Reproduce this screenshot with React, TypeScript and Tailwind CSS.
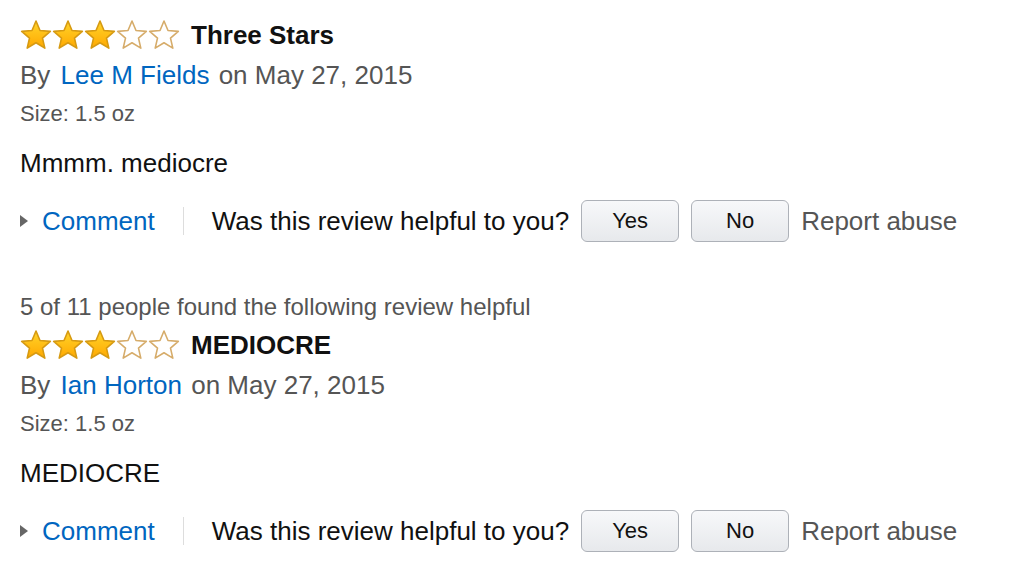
import { useId } from "react";

interface Review {
  id: number;
  helpful?: string;
  rating: number;
  title: string;
  author: string;
  date: string;
  size: string;
  body: string;
}

const REVIEWS: Review[] = [
  { id: 1, rating: 3, title: "Three Stars", author: "Lee M Fields", date: "May 27, 2015", size: "1.5 oz", body: "Mmmm. mediocre" },
  {
    id: 2, helpful: "5 of 11 people found the following review helpful", rating: 3, title: "MEDIOCRE",
    author: "Ian Horton", date: "May 27, 2015", size: "1.5 oz", body: "MEDIOCRE",
  },
];

const STAR = "16,1 20,10.5 30.3,11.4 22.5,18.1 24.8,28.1 16,22.8 7.2,28.1 9.5,18.1 1.7,11.4 12,10.5";

function Star({ filled }: { filled: boolean }) {
  const id = useId();
  return (
    <svg width="32" height="30" viewBox="0 0 32 30" className="block">
      <defs>
        <linearGradient id={id} x1="0" y1="0" x2="0" y2="1">
          <stop offset="0" stopColor="#ffd52b" />
          <stop offset="1" stopColor="#ffa800" />
        </linearGradient>
      </defs>
      <polygon
        points={STAR}
        fill={filled ? `url(#${id})` : "#ffffff"}
        stroke={filled ? "#d69a12" : "#d6ac6a"}
        strokeWidth="1.6"
        strokeLinejoin="round"
      />
    </svg>
  );
}

function Button({ label }: { label: string }) {
  return (
    <button className="w-[98px] h-[42px] rounded-[6px] border border-[#adb1b8] bg-gradient-to-b from-[#f7f8fa] to-[#e7e9ec] text-[22px] text-[#111] leading-none">
      {label}
    </button>
  );
}

function ReviewBlock({ review }: { review: Review }) {
  return (
    <div>
      {review.helpful && <div className="h-[28px] leading-[28px] text-[24px] text-[#555]">{review.helpful}</div>}
      <div className={`flex items-center h-[36px] ${review.helpful ? "mt-[6px]" : ""}`}>
        <div className="flex">
          {[0, 1, 2, 3, 4].map((i) => (
            <Star key={i} filled={i < review.rating} />
          ))}
        </div>
        <span className="ml-[11px] text-[26px] font-bold text-[#111]">{review.title}</span>
      </div>
      <div className="mt-[4px] h-[36px] leading-[36px] text-[26px] text-[#555]">
        By <a className="ml-[3px] mr-[2px] text-[#0066c0]">{review.author}</a> on {review.date}
      </div>
      <div className="mt-[7px] h-[28px] leading-[28px] text-[22px] text-[#555]">Size: {review.size}</div>
      <div className="mt-[17px] h-[36px] leading-[36px] text-[26px] text-[#111]">{review.body}</div>
      <div className="mt-[19px] flex items-center h-[42px] text-[26px]">
        <span className="w-0 h-0 border-y-[6px] border-y-transparent border-l-[8px] border-l-[#666]" />
        <a className="ml-[14px] text-[#0066c0]">Comment</a>
        <span className="ml-[28px] w-px h-[28px] bg-[#ddd]" />
        <span className="ml-[28px] text-[#111]">Was this review helpful to you?</span>
        <div className="ml-[12px] flex gap-[12px]">
          <Button label="Yes" />
          <Button label="No" />
        </div>
        <span className="ml-[12px] text-[#555]">Report abuse</span>
      </div>
    </div>
  );
}

export default function App() {
  return (
    <div className="w-[1026px] h-[588px] bg-white px-[20px] pt-[17px] font-['Liberation_Sans',Arial,sans-serif]">
      <div className="flex flex-col gap-[51px]">
        {REVIEWS.map((r) => (
          <ReviewBlock key={r.id} review={r} />
        ))}
      </div>
    </div>
  );
}
